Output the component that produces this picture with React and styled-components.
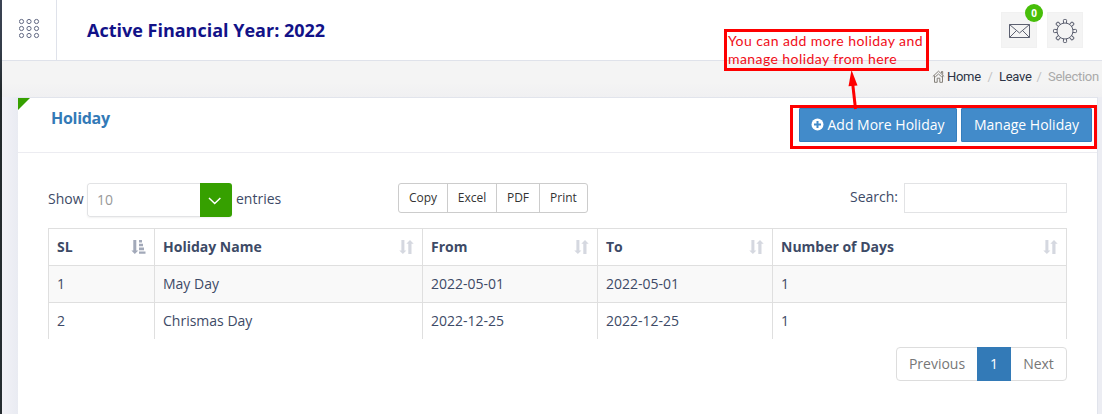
import React from "react";
import styled, { createGlobalStyle } from "styled-components";

const Global = createGlobalStyle`
  * { box-sizing: border-box; }
  html, body, #root { height: 100%; }
  body {
    margin: 0;
    overflow: hidden;
    font: 14px/20px "Open Sans", "Noto Sans", sans-serif;
    color: #3d4a66;
  }
  button, input { font-family: inherit; }
`;

const Page = styled.div`
  position: relative;
  width: 1102px;
  height: 414px;
  overflow: hidden;
  display: flex;
  background: #f4f4f4;
`;
const SideEdge = styled.div`
  width: 2px;
  flex: none;
  background: linear-gradient(#3b4354, #343d49 12%, #22292c 22%, #262d31);
`;
const Main = styled.div`
  flex: 1;
  min-width: 0;
  display: flex;
  flex-direction: column;
`;
const Header = styled.header`
  height: 61px;
  flex: none;
  display: flex;
  background: #fff;
  border-bottom: 1px solid #dfe2ea;
`;
const MenuToggle = styled.div`
  width: 55px;
  padding: 18px 0 0 17px;
  border-right: 1px solid #dfe2ea;
`;
const Title = styled.h1`
  margin: 0;
  padding: 18px 0 0 30px;
  flex: 1;
  font-size: 18px;
  line-height: 25px;
  font-weight: 700;
  letter-spacing: 0;
  color: #121288;
`;
const Tools = styled.div`
  display: flex;
  gap: 10px;
  padding: 12px 19px 0 0;
`;
const Tool = styled.div`
  position: relative;
  width: 36px;
  height: 36px;
  background: #f4f4f4;
  border: 1px solid #f1f1f1;
  svg { display: block; }
`;
const Badge = styled.span`
  position: absolute;
  left: 23px;
  top: -9px;
  width: 18px;
  height: 18px;
  border-radius: 50%;
  background: #47be09;
  color: #fff;
  font-size: 10px;
  font-weight: 700;
  line-height: 18px;
  text-align: center;
`;
const Crumbs = styled.nav`
  height: 36px;
  flex: none;
  display: flex;
  justify-content: flex-end;
  padding: 6px 4px 0 0;
  font: 13px/20px Roboto, sans-serif;
  letter-spacing: -0.3px;
  background: linear-gradient(#f4f4f4 60%, #f0f0f2);
`;
const HomeIcon = styled.svg`
  display: block;
  margin: 3px 2px 0 0;
`;
const Crumb = styled.span`
  width: ${(p) => p.$w}px;
  white-space: nowrap;
  color: ${(p) => (p.$muted ? "#aaa" : "#2d3446")};
`;
const Slash = styled.span`
  width: ${(p) => p.$w}px;
  text-align: center;
  color: #c4c4c4;
`;
const Body = styled.div`
  flex: 1;
  display: flex;
  padding: 0 4px 0 16px;
  background: linear-gradient(90deg, #f2f2f7, #e9ebf2 16px, #ecedf3);
`;
const Panel = styled.section`
  position: relative;
  flex: 1;
  background: #fff;
  border: solid #e1e4ec;
  border-width: 1px 1px 0 0;
`;
const Corner = styled.i`
  position: absolute;
  left: 0;
  top: 0;
  border-top: 12px solid #36a000;
  border-right: 12px solid transparent;
`;
const PanelHead = styled.div`
  height: 55px;
  display: flex;
  align-items: flex-start;
  justify-content: space-between;
  padding: 10px 5px 0 33px;
  border-bottom: 1px solid #ececf1;
`;
const PanelTitle = styled.h2`
  margin: 0;
  font: 700 16px/20px "Open Sans", sans-serif;
  letter-spacing: -0.3px;
  color: #337ab7;
`;
const Actions = styled.div`
  display: flex;
  gap: 4px;
`;
const Action = styled.button`
  width: ${(p) => p.$w}px;
  height: 34px;
  display: flex;
  align-items: center;
  justify-content: center;
  gap: 3px;
  padding: 0 0 2px;
  border: 1px solid #357ebd;
  border-radius: 1px;
  background: #428bca;
  color: #fff;
  font-size: 14px;
  white-space: nowrap;
`;
const Content = styled.div`
  padding: 30px 30px 0;
`;
const Controls = styled.div`
  height: 45px;
  display: flex;
  align-items: flex-start;
`;
const Label = styled.span`
  width: ${(p) => p.$w}px;
  padding-top: ${(p) => p.$top}px;
  white-space: nowrap;
`;
const Select = styled.div`
  width: 145px;
  height: 34px;
  display: flex;
  margin-right: 4px;
  border-radius: 3px;
  overflow: hidden;
  box-shadow: 0 1px 2px rgba(0, 0, 0, 0.06);
`;
const SelectValue = styled.span`
  flex: 1;
  border: 1px solid #e2e3e5;
  border-right: 0;
  border-radius: 3px 0 0 3px;
  padding: 6px 9px;
  color: #999;
`;
const SelectArrow = styled.span`
  width: 32px;
  background: #36a000;
  svg { display: block; }
`;
const Exports = styled.div`
  display: flex;
  height: 30px;
  margin-left: 117px;
  border: 1px solid #ccc;
  border-radius: 3px;
`;
const ExportButton = styled.button`
  width: ${(p) => p.$w}px;
  padding: 0 0 1px;
  border: 0;
  background: transparent;
  font-size: 12px;
  line-height: 18px;
  color: #333;
  & + & { border-left: 1px solid #ccc; }
`;
const Search = styled.label`
  margin-left: auto;
  display: flex;
`;
const SearchInput = styled.input`
  width: 163px;
  height: 30px;
  border: 1px solid #e2e3e5;
  background: #fff;
`;
const Table = styled.table`
  width: 1019px;
  table-layout: fixed;
  border-collapse: separate;
  border-spacing: 0;
  border-right: 1px solid #dfdfdf;
`;
const Cell = styled.td`
  height: 37px;
  padding: 0 8px;
  border: solid #dfdfdf;
  border-width: 1px 0 0 1px;
  background: ${(p) => (p.$shade ? "#f9f9f9" : "#fff")};
`;
const HeadCell = styled(Cell)`
  text-align: left;
  font-weight: 700;
`;
const HeadRow = styled.div`
  display: flex;
  justify-content: space-between;
  align-items: center;
  svg { display: block; }
`;
const Pager = styled.div`
  display: flex;
  width: 171px;
  height: 34px;
  margin: 8px 0 0 auto;
  border: 1px solid #ddd;
  border-radius: 4px;
`;
const PageItem = styled.span`
  width: ${(p) => p.$w}px;
  line-height: 32px;
  text-align: center;
  color: #777;
  ${(p) => p.$active && "margin: -1px 0; line-height: 34px; background: #337ab7; color: #fff;"}
`;
const Note = styled.div`
  position: absolute;
  left: 724px;
  top: 29px;
  width: 205px;
  height: 42px;
  border: 3px solid #fe0000;
  padding: 0 0 0 1px;
  font: 14px/18px Lato, "Noto Sans", sans-serif;
  letter-spacing: 0.42px;
  white-space: nowrap;
  color: #f00d18;
`;
const Highlight = styled.div`
  position: absolute;
  left: 790px;
  top: 105px;
  width: 307px;
  height: 44px;
  border: 3px solid #fe0000;
`;
const Arrow = styled.svg`
  position: absolute;
  left: 844px;
  top: 68px;
`;

const SortIcon = () => (
  <svg width="15" height="16" viewBox="0 0 15 16" fill="#d5d8e0">
    <path d="M2.4 1h3v10.5h2L3.9 15 .3 11.5h2.1zM9.3 15V4.7h-2L11 1l3.7 3.7h-2.2V15z" />
  </svg>
);
const SortAscIcon = () => (
  <svg width="15" height="16" viewBox="0 0 15 16" fill="#a2a9b9">
    <path d="M2.3 1h3v10.5h2L3.8 15 .4 11.5h1.9zM8 1h3v2.5H8zM8 4.7h4v2.6H8zM8 8.6h5v2.6H8zM8 12.4h6.5V14.7H8z" />
  </svg>
);

const columns = [
  ["SL", 106],
  ["Holiday Name", 268],
  ["From", 175],
  ["To", 175],
  ["Number of Days", 294],
];
const rows = [
  ["1", "May Day", "2022-05-01", "2022-05-01", "1"],
  ["2", "Chrismas Day", "2022-12-25", "2022-12-25", "1"],
];

export default function App() {
  return (
    <Page>
      <Global />
      <SideEdge />
      <Main>
        <Header>
          <MenuToggle>
            <svg width="21" height="22" fill="none" stroke="#626983">
              {[3.5, 10.5, 17.5].map((y) =>
                [2.5, 10, 17.5].map((x) => <circle key={`${x}-${y}`} cx={x} cy={y} r="2.1" />)
              )}
            </svg>
          </MenuToggle>
          <Title>Active Financial Year: 2022</Title>
          <Tools>
            <Tool>
              <svg width="34" height="34" fill="none" stroke="#5c6070">
                <path d="M7.5 11.5h20v13h-20zM7.5 11.5l10 8.5 10-8.5M7.5 24.5l7-7M27.5 24.5l-7-7" />
              </svg>
              <Badge>0</Badge>
            </Tool>
            <Tool>
              <svg width="34" height="34" fill="none" stroke="#5c6070">
                <circle cx="17" cy="18" r="8" />
                {[0, 45, 90, 135, 180, 225, 270, 315].map((a) => (
                  <path key={a} transform={`rotate(${a} 17 18)`} d="M15.5 10l-.1-2.6q0-.9.8-.9h1.6q.8 0 .8.9L18.5 10" />
                ))}
              </svg>
            </Tool>
          </Tools>
        </Header>
        <Crumbs>
          <HomeIcon width="13" height="13" fill="none" stroke="#85817b">
            <path d="M.8 6.5l5.7-5.3 5.7 5.3M2.5 5.5v6.8h2.7V8.2h2.6v4.1h2.7V5.5M9.5 3V1.5h1.2v3M3.2 7l3.3-3 3.3 3" />
          </HomeIcon>
          <Crumb $w={34}>Home</Crumb>
          <Slash $w={18}>/</Slash>
          <Crumb $w={31}>Leave</Crumb>
          <Slash $w={18}>/</Slash>
          <Crumb $w={50} $muted>Selection</Crumb>
        </Crumbs>
        <Body>
          <Panel>
            <Corner />
            <PanelHead>
              <PanelTitle>Holiday</PanelTitle>
              <Actions>
                <Action $w={158}>
                  <svg width="13" height="13" viewBox="0 0 13 13">
                    <circle cx="6.5" cy="6.5" r="6" fill="#fff" />
                    <path d="M6.5 3v7M3 6.5h7" stroke="#428bca" strokeWidth="2" />
                  </svg>
                  Add More Holiday
                </Action>
                <Action $w={131}>Manage Holiday</Action>
              </Actions>
            </PanelHead>
            <Content>
              <Controls>
                <Label $w={39} $top={6}>Show</Label>
                <Select>
                  <SelectValue>10</SelectValue>
                  <SelectArrow>
                    <svg width="32" height="34" fill="none" stroke="#fff" strokeWidth="1.5">
                      <path d="M9 15l5.7 5.5 5.7-5.5" />
                    </svg>
                  </SelectArrow>
                </Select>
                <Label $w={45} $top={6}>entries</Label>
                <Exports>
                  <ExportButton $w={48}>Copy</ExportButton>
                  <ExportButton $w={49}>Excel</ExportButton>
                  <ExportButton $w={43}>PDF</ExportButton>
                  <ExportButton $w={48}>Print</ExportButton>
                </Exports>
                <Search>
                  <Label $w={54} $top={4}>Search:</Label>
                  <SearchInput />
                </Search>
              </Controls>
              <Table>
                <colgroup>
                  {columns.map(([name, w]) => <col key={name} width={w} />)}
                </colgroup>
                <thead>
                  <tr>
                    {columns.map(([name], i) => (
                      <HeadCell as="th" key={name}>
                        <HeadRow>{name}{i === 0 ? <SortAscIcon /> : <SortIcon />}</HeadRow>
                      </HeadCell>
                    ))}
                  </tr>
                </thead>
                <tbody>
                  {rows.map((row, r) => (
                    <tr key={r}>
                      {row.map((value, c) => <Cell key={c} $shade={r === 0}>{value}</Cell>)}
                    </tr>
                  ))}
                </tbody>
              </Table>
              <Pager>
                <PageItem $w={80}>Previous</PageItem>
                <PageItem $w={34} $active>1</PageItem>
                <PageItem $w={55}>Next</PageItem>
              </Pager>
            </Content>
          </Panel>
        </Body>
      </Main>
      <Note>You can add more holiday and<br />manage holiday from here</Note>
      <Highlight />
      <Arrow width="18" height="42">
        <path d="M11.5 41L8.5 14" stroke="#fe0000" strokeWidth="3" />
        <path d="M7.5 2l6 15.5-9 .8z" fill="#fe0000" />
      </Arrow>
    </Page>
  );
}
